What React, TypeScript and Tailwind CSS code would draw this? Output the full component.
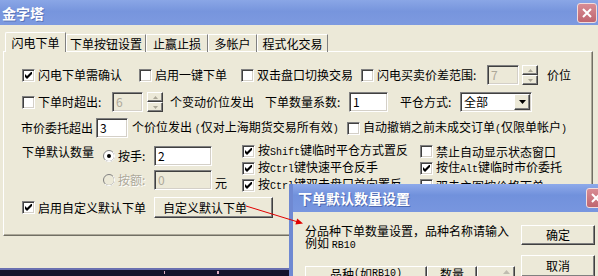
import React from 'react'

const sunken =
  'border border-t-[#808080] border-l-[#808080] border-r-white border-b-white shadow-[inset_1px_1px_0_#404040,inset_-1px_-1px_0_#d4d0c8]'
const raised =
  'border border-t-white border-l-white border-r-[#404040] border-b-[#404040] shadow-[inset_-1px_-1px_0_#808080] bg-[#ece9d8]'

function M({ children }: { children: React.ReactNode }) {
  return <span className="font-['Liberation_Mono',monospace] text-[10px]">{children}</span>
}

function Check({ on = false }: { on?: boolean }) {
  return (
    <span className={`relative inline-block w-[13px] h-[13px] shrink-0 bg-white ${sunken}`}>
      {on && (
        <svg className="absolute left-[2px] top-[2px]" width="7" height="7" viewBox="0 0 7 7">
          <polygon points="0,2 2,4 6,0 7,0 7,2 2,7 0,5" fill="#000" />
        </svg>
      )}
    </span>
  )
}

function Radio({ on = false, disabled = false }: { on?: boolean; disabled?: boolean }) {
  return (
    <svg width="12" height="12" viewBox="0 0 12 12" className="shrink-0">
      <circle cx="6" cy="6" r="5.5" fill={disabled ? '#ece9d8' : '#fff'} stroke="#808080" />
      <path d="M10 2 A5.5 5.5 0 0 1 2 10" stroke="#fff" fill="none" />
      {on && <circle cx="6" cy="6" r="2" fill="#000" />}
    </svg>
  )
}

function CL({ on = false, w, children }: { on?: boolean; w?: string; children: React.ReactNode }) {
  return (
    <div className={`flex items-center gap-[3px] shrink-0 ${w ?? ''}`}>
      <Check on={on} />
      <span className="leading-[12px] whitespace-nowrap">{children}</span>
    </div>
  )
}

function Field({ w, v, disabled = false }: { w: string; v: string; disabled?: boolean }) {
  return (
    <div
      className={`h-[20px] shrink-0 flex items-center pl-[3px] leading-[12px] ${w} ${sunken} ${
        disabled ? 'bg-[#ece9d8] text-[#aca899]' : 'bg-white'
      }`}
    >
      {v}
    </div>
  )
}

function Spin({ className = '' }: { className?: string }) {
  return (
    <div className={`flex flex-col w-[16px] h-[20px] shrink-0 ${className}`}>
      <div className={`h-[10px] flex items-center justify-center ${raised}`}>
        <svg width="5" height="3" viewBox="0 0 5 3"><polygon points="2.5,0 5,3 0,3" fill="#aca899" /></svg>
      </div>
      <div className={`h-[10px] flex items-center justify-center ${raised}`}>
        <svg width="5" height="3" viewBox="0 0 5 3"><polygon points="0,0 5,0 2.5,3" fill="#aca899" /></svg>
      </div>
    </div>
  )
}

function CloseBtn() {
  return (
    <div className="w-[20px] h-[20px] shrink-0 rounded-[3px] border border-[#f2dcdc] bg-[linear-gradient(to_bottom,#d88c94,#bf6670)] flex items-center justify-center">
      <svg width="10" height="10" viewBox="0 0 10 10">
        <path d="M1 1 L9 9 M9 1 L1 9" stroke="#fff" strokeWidth="2" />
      </svg>
    </div>
  )
}

export default function App() {
  return (
    <div className="relative w-[598px] h-[276px] overflow-hidden bg-[#ece9d8] text-[12px] text-black font-['Noto_Sans_CJK_SC','Noto_Sans_CJK_JP',sans-serif]">
      {/* title bar */}
      <div className="h-[25px] flex items-center pl-[2px] pr-[1px] bg-[linear-gradient(to_bottom,#8aa6e6,#7795dd_45%,#7d9ae0)]">
        <span className="text-[14px] font-bold text-white leading-[14px] [text-shadow:1px_1px_0_#5a74b8]">金字塔</span>
        <div className="ml-auto">
          <CloseBtn />
        </div>
      </div>

      {/* tabs */}
      <div className="mt-[8px] ml-[5px] h-[19px] flex items-end relative z-10 -mb-px">
        <div className="h-[20px] w-[61px] flex items-center justify-center border-l border-t border-white border-r border-r-[#808080] rounded-tl-[2px] bg-[#ece9d8] leading-[12px]">
          闪电下单
        </div>
        {['下单按钮设置', '止赢止损', '多帐户', '程式化交易'].map((t, i) => (
          <div
            key={t}
            className={`h-[18px] flex items-center justify-center border-l border-t border-white border-r border-r-[#808080] leading-[12px] ${
              ['w-[80px]', 'w-[62px]', 'w-[49px]', 'w-[71px]'][i]
            }`}
          >
            {t}
          </div>
        ))}
      </div>

      {/* tab panel */}
      <div className="ml-[3px] w-[590px] h-[185px] border border-t-white border-l-white border-r-[#716f64] border-b-[#716f64] shadow-[inset_-1px_-1px_0_#aca899] flex flex-col">
        <div className="mt-[13px] h-[20px] flex items-center pl-[18px]">
          <CL on w="w-[117px]">闪电下单需确认</CL>
          <CL w="w-[102px]">启用一键下单</CL>
          <CL w="w-[120px]">双击盘口切换交易</CL>
          <CL w="w-[126px]">闪电买卖价差范围:</CL>
          <Field w="w-[32px]" v="7" disabled />
          <Spin className="ml-[3px]" />
          <span className="ml-[9px] leading-[12px]">价位</span>
        </div>

        <div className="mt-[7px] h-[20px] flex items-center pl-[18px]">
          <CL w="w-[90px]">下单时超出:</CL>
          <Field w="w-[31px]" v="6" disabled />
          <Spin className="ml-[4px]" />
          <span className="ml-[7px] w-[95px] leading-[12px] shrink-0">个变动价位发出</span>
          <span className="w-[84px] leading-[12px] shrink-0">下单数量系数:</span>
          <Field w="w-[39px]" v="1" />
          <span className="ml-[12px] w-[60px] leading-[12px] shrink-0">平仓方式:</span>
          <div className={`w-[72px] h-[20px] shrink-0 flex items-center bg-white pl-[3px] pr-[1px] ${sunken}`}>
            <span className="leading-[12px]">全部</span>
            <div className={`ml-auto w-[16px] h-[16px] flex items-center justify-center ${raised}`}>
              <svg width="7" height="4" viewBox="0 0 7 4"><polygon points="0,0 7,0 3.5,4" fill="#000" /></svg>
            </div>
          </div>
        </div>

        <div className="mt-[6px] h-[20px] flex items-center pl-[17px]">
          <span className="w-[75px] shrink-0 leading-[12px]">市价委托超出</span>
          <Field w="w-[32px]" v="3" />
          <span className="ml-[4px] w-[215px] shrink-0 leading-[12px] whitespace-nowrap">
            个价位发出 <M>(</M>仅对上海期货交易所有效<M>)</M>
          </span>
          <CL>
            自动撤销之前未成交订单<M>(</M>仅限单帐户<M>)</M>
          </CL>
        </div>

        <div className="mt-[6px] h-[53px] flex pl-[18px]">
          <span className="w-[81px] shrink-0 mt-[2px] leading-[12px]">下单默认数量</span>
          <div className="w-[139px] shrink-0 mt-[2px] flex flex-col gap-[4px]">
            <div className="h-[20px] flex items-center">
              <Radio on />
              <span className="ml-[3px] w-[36px] leading-[12px]">按手:</span>
              <Field w="w-[58px]" v="2" />
            </div>
            <div className="h-[20px] flex items-center">
              <Radio disabled />
              <span className="ml-[3px] w-[36px] leading-[12px] text-[#aca899] [text-shadow:1px_1px_0_#fff]">按额:</span>
              <Field w="w-[58px]" v="0" disabled />
              <span className="ml-[3px] mt-[6px] leading-[12px]">元</span>
            </div>
          </div>
          <div className="w-[178px] shrink-0 -mt-px flex flex-col">
            <div className="h-[17px] flex items-center"><CL on>按<M>Shift</M>键临时平仓方式置反</CL></div>
            <div className="h-[17px] flex items-center"><CL on>按<M>Ctrl</M>键快速平仓反手</CL></div>
            <div className="h-[17px] flex items-center"><CL on>按<M>Ctrl</M>键双击盘口首向置反</CL></div>
          </div>
          <div className="w-[170px] shrink-0 -mt-px flex flex-col">
            <div className="h-[17px] flex items-center"><CL>禁止自动显示状态窗口</CL></div>
            <div className="h-[17px] flex items-center"><CL on>按住<M>Alt</M>键临时市价委托</CL></div>
            <div className="h-[17px] flex items-center"><CL>双击主图按价格下单</CL></div>
          </div>
        </div>

        <div className="h-[21px] flex items-center pl-[18px]">
          <CL on w="w-[132px]">启用自定义默认下单</CL>
          <div className={`w-[119px] h-[21px] flex items-center pl-[8px] leading-[12px] ${raised}`}>自定义默认下单</div>
        </div>
      </div>

      {/* lower strip */}
      <div className="h-[32px]" />
      <div className="h-[8px] border-t-[2px] border-[#6a70b0] bg-[#12122c] flex">
        <span className="ml-[164px] mt-[1px] w-px h-[3px] bg-[#d8a8c0]" />
        <span className="ml-[52px] mt-[1px] w-[2px] h-[3px] bg-[#d8a8c0]" />
      </div>

      {/* sub dialog */}
      <div className="absolute left-[289px] top-[184px] w-[320px] h-[100px] bg-[#ece9d8] border-l-[4px] border-[#6f89d2] flex flex-col">
        <div className="h-[28px] shrink-0 flex items-center pl-[5px] pr-[3px] bg-[linear-gradient(to_bottom,#8eaaea,#7191dc_40%,#7896df)]">
          <span className="text-[14px] font-bold text-white leading-[14px] [text-shadow:1px_1px_0_#4d68b0]">下单默认数量设置</span>
          <div className="ml-auto">
            <CloseBtn />
          </div>
        </div>
        <div className="flex pt-[13px] pl-[12px]">
          <div className="w-[216px] shrink-0 flex flex-col">
            <span className="leading-[12px] whitespace-nowrap">分品种下单数量设置，品种名称请输入</span>
            <span className="leading-[12px] whitespace-nowrap">例如 <M>RB10</M></span>
            <div className="mt-[14px] flex h-[16px]">
              <div className={`w-[122px] flex items-center justify-center leading-[12px] ${raised}`}>
                品种<M>(</M>如<M>RB10)</M>
              </div>
              <div className={`w-[50px] flex items-center justify-center leading-[12px] ${raised}`}>数量</div>
              <div className={`w-[38px] flex items-start justify-end pr-[4px] pt-[3px] ${raised}`}>
                <svg width="7" height="4" viewBox="0 0 7 4"><polygon points="3.5,0 7,4 0,4" fill="#c0bcb0" /></svg>
              </div>
            </div>
          </div>
          <div className="flex flex-col gap-[10px]">
            <div className={`w-[74px] h-[20px] flex items-center justify-center leading-[12px] ${raised}`}>确定</div>
            <div className={`w-[74px] h-[22px] flex items-center justify-center leading-[12px] ${raised}`}>取消</div>
          </div>
        </div>
      </div>

      {/* red arrow */}
      <svg className="absolute left-0 top-0 pointer-events-none" width="598" height="276" viewBox="0 0 598 276">
        <line x1="246" y1="206" x2="298" y2="222" stroke="#e00000" strokeWidth="1" />
        <polygon points="303,223.5 295.4,224.6 297.2,218.4" fill="#e00000" />
      </svg>
    </div>
  )
}
